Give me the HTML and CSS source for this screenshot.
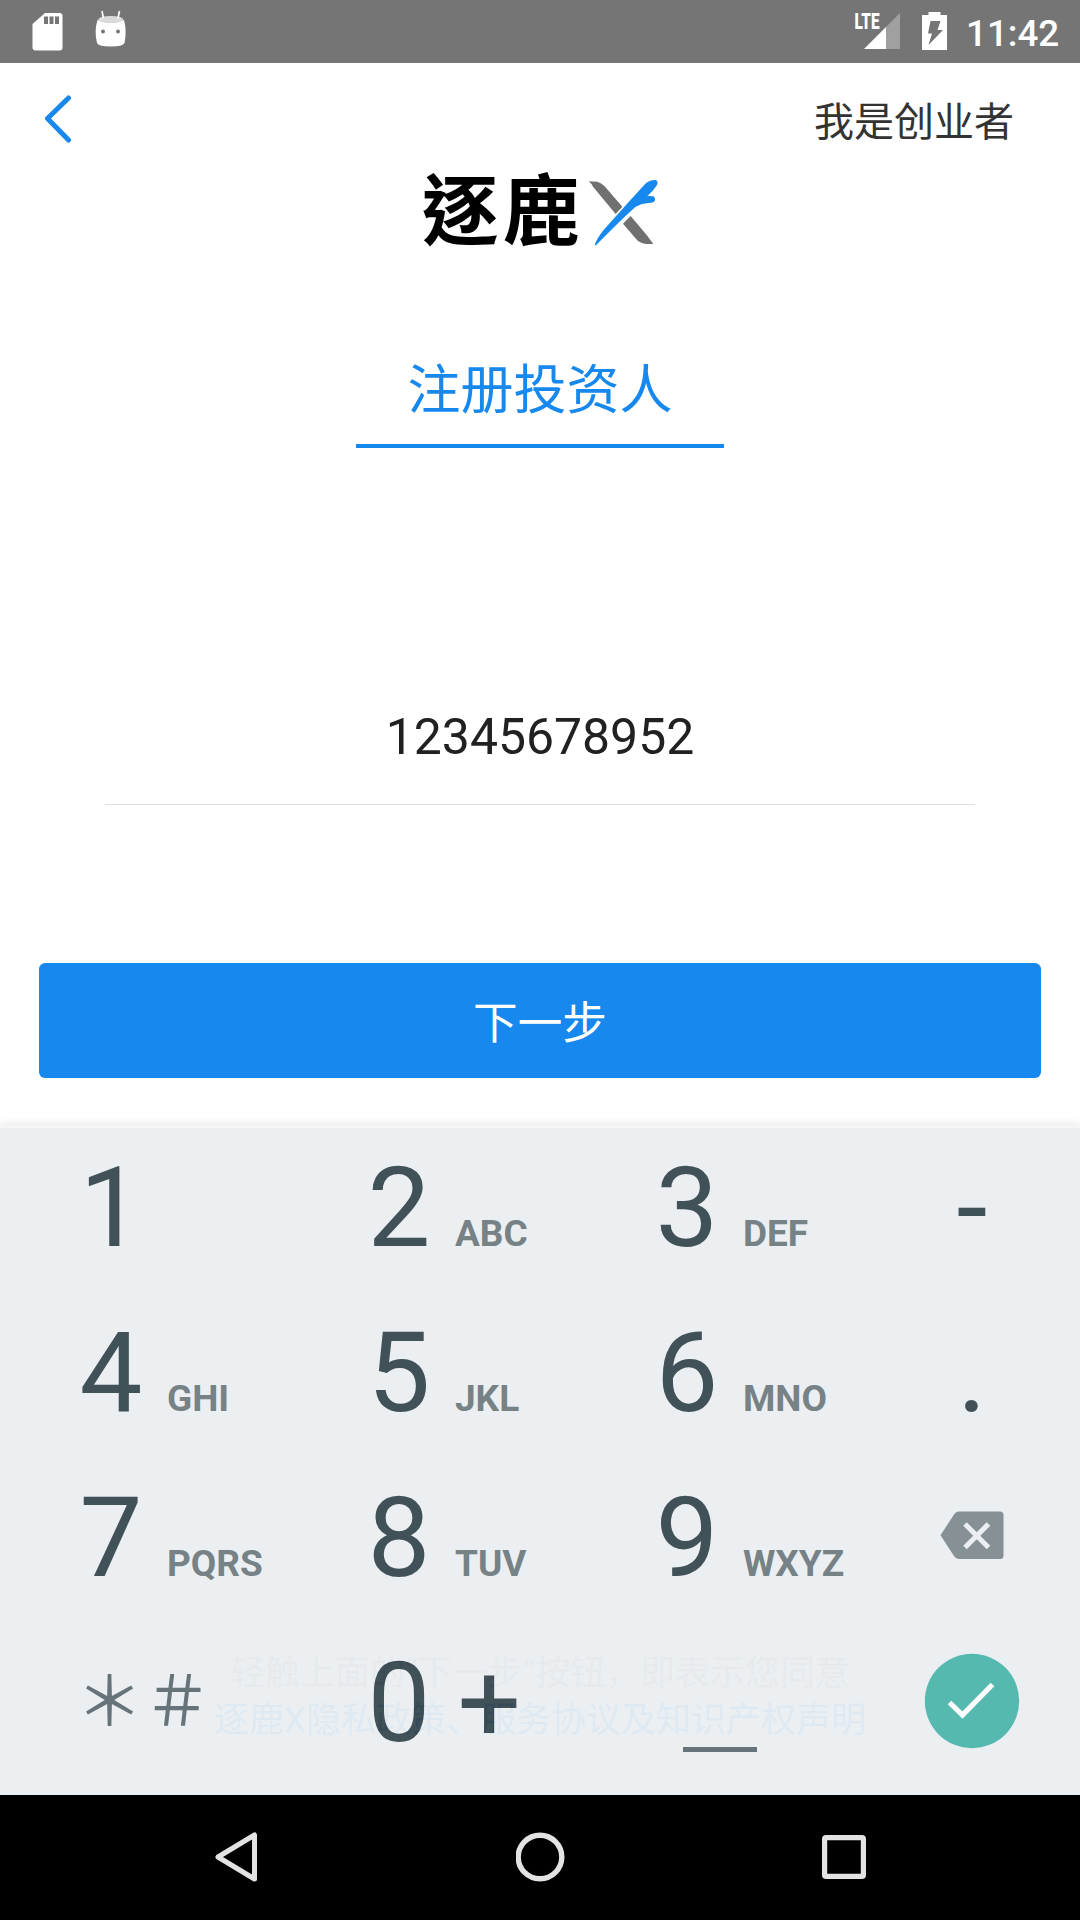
FILE: index.html
```
<!DOCTYPE html>
<html lang="zh-CN">
<head>
<meta charset="utf-8">
<title>注册投资人</title>
<link rel="stylesheet" href="styles.css">
</head>
<body>
<div class="screen">
  <div class="status">
    <svg class="status-left" width="110" height="63" viewBox="0 0 110 63">
      <path d="M14 13H28.500Q31.500 13 31.500 16V47.500Q31.500 50.500 28.500 50.500H4.500Q1.500 50.500 1.500 47.500V24Z" fill="#fff"/>
      <path d="M13 16.500h4v7.500h-4zM18.500 16.500h4v7.500h-4zM24 16.500h4v7.500h-4z" fill="#757575"/>
      <path d="M66.500 20Q80 26 93 20Q96 31 93.500 43Q92 46.500 79.500 46.500Q67.500 46.500 66 43Q63 31 66.500 20Z" fill="#fff"/>
      <ellipse cx="79.700" cy="19.500" rx="12.500" ry="3.500" fill="#dadada"/>
      <path d="M71 11L72.500 18.500M88.500 11L87 18.500" stroke="#fff" stroke-width="1.700" fill="none"/>
      <circle cx="72" cy="31.500" r="2" fill="#757575"/><circle cx="87" cy="31.500" r="2" fill="#757575"/>
    </svg>
    <div class="status-right">
      <svg width="100" height="63" viewBox="850 0 100 63">
        <text class="lte" x="854.500" y="29" textLength="25" lengthAdjust="spacingAndGlyphs">LTE</text>
        <path d="M886 27L900 13V49H886Z" fill="#a0a0a0"/>
        <path d="M864 49L886 27V49Z" fill="#fff"/>
        <path d="M928.500 15V12H940.500V15H947V50H922V15Z" fill="#fff"/>
        <path d="M930.500 21H940.500L937.500 30H943L928.500 45L932 33.500H928Z" fill="#757575"/>
      </svg>
      <span class="clock">11:42</span>
    </div>
  </div>

  <div class="header">
    <svg width="30" height="52" viewBox="0 0 30 52"><path d="M26.500 5L5.500 25.500L26.500 47" fill="none" stroke="#1688ee" stroke-width="5" stroke-linecap="round" stroke-linejoin="round"/></svg>
    <span class="switch-role">我是创业者</span>
  </div>

  <div class="logo">
    <span class="logo-text" lang="zh-TW">逐鹿</span>
    <svg class="logo-x" width="72" height="70" viewBox="566 84 216 210">
      <path d="M568 94L594 95Q606 98 616 109L669 170L649 192L581 110Q576 100 568 94Z" fill="#707070"/>
      <path d="M694 198L745 259Q752 270 762 281Q735 286 715 272L671 221Z" fill="#707070"/>
      <path d="M586 286Q592 266 612 241L690 154L738 101Q752 89 769 90Q778 94 773 105Q762 123 744 138L762 139Q770 145 766 154Q760 160 746 159Q724 161 708 171L681 196Q648 227 590 286Z" fill="#1688ee"/>
    </svg>
  </div>

  <div class="tab">注册投资人</div>
  <div class="phone">12345678952</div>
  <div class="next">下一步</div>
  <div class="terms">轻触上面的“下一步”按钮&#xFF0C;即表示您同意<br><span class="link">逐鹿X隐私政策、服务协议及知识产权声明</span></div>

  <div class="keyboard">
    <div class="key">1</div>
    <div class="key">2<small>ABC</small></div>
    <div class="key">3<small>DEF</small></div>
    <div class="key side">-</div>
    <div class="key">4<small>GHI</small></div>
    <div class="key">5<small>JKL</small></div>
    <div class="key">6<small>MNO</small></div>
    <div class="key side">.</div>
    <div class="key">7<small>PQRS</small></div>
    <div class="key">8<small>TUV</small></div>
    <div class="key">9<small>WXYZ</small></div>
    <div class="key icon erase">
      <svg width="64" height="48" viewBox="0 0 64 48"><path d="M18.500 .5H60Q63.500 .5 63.500 4V44.500Q63.500 48 60 48H18.500Q16 48 14 45L.5 24.300L14 3.500Q16 .5 18.500 .5Z" fill="#7f8b8f"/><path d="M25 13L48.500 36.500M48.500 13L25 36.500" stroke="#ebeff2" stroke-width="5"/></svg>
    </div>
    <div class="key symbols">&#xFF0A;&#xFF03;</div>
    <div class="key zero">0<span class="plus">+</span></div>
    <div class="key space"><i class="space-bar"></i></div>
    <div class="key icon done">
      <svg width="96" height="96" viewBox="0 0 96 96"><circle cx="48" cy="48" r="47.200" fill="#4db6ac"/><path d="M25.500 49.500L38.500 62L68.500 31.500" fill="none" stroke="#fff" stroke-width="5.200"/></svg>
    </div>
  </div>

  <div class="navbar">
    <svg width="46" height="52" viewBox="0 0 46 52"><path d="M41.500 4V48L5 26Z" fill="none" stroke="#e3e3e3" stroke-width="5" stroke-linejoin="round"/></svg>
    <svg width="50" height="50" viewBox="0 0 50 50"><circle cx="24" cy="25" r="21.800" fill="none" stroke="#e3e3e3" stroke-width="5.400"/></svg>
    <svg width="44" height="44" viewBox="0 0 44 44"><rect x="2.600" y="2.600" width="38.800" height="38.800" rx="1.500" fill="none" stroke="#e3e3e3" stroke-width="5.200"/></svg>
  </div>
</div>
</body>
</html>
```

FILE: styles.css
```
* { box-sizing: border-box; }
body {
  margin: 0;
  background: #fff;
  font-family: Roboto, "Noto Sans CJK SC", sans-serif;
}
svg { display: block; flex: none; }
.screen {
  position: relative;
  width: 1080px;
  height: 1920px;
  overflow: hidden;
  display: flex;
  flex-direction: column;
  align-items: center;
}
.status {
  width: 100%;
  height: 63px;
  background: #757575;
  display: flex;
  justify-content: space-between;
  padding: 0 20px 0 31px;
}
.status-right { display: flex; }
.lte { font: 900 22px Roboto, sans-serif; fill: #fff; }
.clock {
  width: 94px;
  margin-left: 16px;
  font-size: 36.75px;
  font-weight: 500;
  line-height: 67px;
  color: #fff;
}
.header {
  width: 100%;
  height: 97px;
  padding: 30px 66px 0 42px;
  display: flex;
  justify-content: space-between;
  align-items: flex-start;
}
.switch-role {
  padding-top: 4px;
  font-size: 40px;
  line-height: 52px;
  color: #333;
}
.logo {
  height: 100px;
  display: flex;
  padding-left: 1px;
}
.logo-text {
  width: 166px;
  font: 700 77px/92px "Noto Sans CJK TC", sans-serif;
  letter-spacing: 4.5px;
  color: #000;
}
.logo-x { margin-top: 18px; }
.tab {
  width: 368px;
  height: 108px;
  margin-top: 80px;
  border-bottom: 4px solid #1688ee;
  text-align: center;
  font-size: 53px;
  line-height: 103px;
  color: #1688ee;
}
.phone {
  width: 870px;
  height: 137px;
  margin-top: 220px;
  border-bottom: 1px solid #ddd;
  text-align: center;
  font-size: 49.9px;
  line-height: 138px;
  color: #212121;
}
.next {
  width: 1002px;
  height: 115px;
  margin-top: 158px;
  border-radius: 6px;
  background: #1688ee;
  text-align: center;
  font-size: 44.6px;
  line-height: 122px;
  color: #fff;
}
.terms {
  margin-top: 572px;
  text-align: center;
  font-size: 35px;
  line-height: 47px;
  white-space: nowrap;
  color: #999;
}
.link { color: #1688ee; }

/* The keyboard slides over the page and lets a little of it through. */
.keyboard {
  position: absolute;
  left: 0;
  bottom: 125px;
  width: 1080px;
  height: 670px;
  border-top: 3px solid #f4f5f6;
  background: #ebeff2;
  box-shadow: 0 -2px 8px rgba(0, 0, 0, .09);
  opacity: .945;
  display: grid;
  grid-template-columns: 288px 288px 288px 216px;
  grid-auto-rows: 165px;
}
.key {
  display: flex;
  align-items: baseline;
  padding-left: 79.5px;
  font-size: 112px;
  line-height: 160px;
  color: #37474f;
}
.key small {
  margin-left: 24.5px;
  font-size: 37px;
  font-weight: 700;
  line-height: 1;
  color: #707b80;
}
.key.side { padding: 0; justify-content: center; }
.key.icon { padding: 0; justify-content: center; align-items: flex-start; }
.erase svg { margin-top: 53px; }
.done svg { margin-top: 30px; }
.key.symbols {
  padding: 0 0 0 75.5px;
  align-items: flex-start;
  font: 400 68px/148px "Noto Sans CJK SC", sans-serif;
  color: #5e6c72;
}
.plus { margin-left: 27px; }
.key.space { padding: 124px 0 0 107px; }
.space-bar {
  width: 74px;
  height: 5px;
  background: #5e6c72;
}
.navbar {
  position: absolute;
  left: 0;
  bottom: 0;
  width: 1080px;
  height: 125px;
  background: #000;
  display: flex;
  align-items: center;
  justify-content: space-between;
  padding: 0 214px 2px 213px;
}
```
